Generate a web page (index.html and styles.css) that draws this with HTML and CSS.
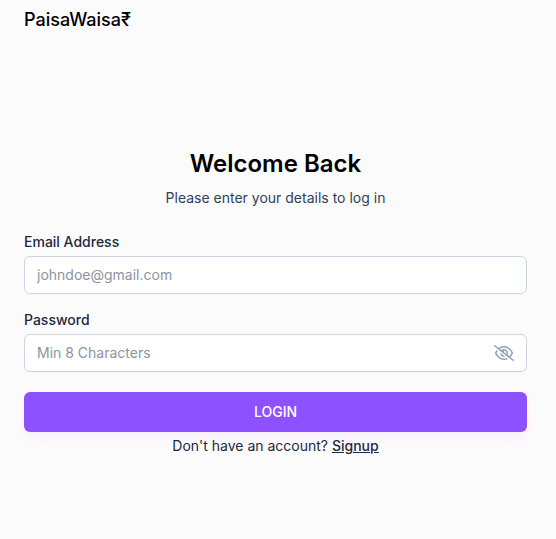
FILE: index.html
```html
<!DOCTYPE html>
<html lang="en">
<head>
<meta charset="utf-8">
<title>PaisaWaisa</title>
<link rel="stylesheet" href="styles.css">
</head>
<body>
<div class="page">
  <h2 class="brand">PaisaWaisa₹</h2>
  <main class="content">
    <h1 class="title">Welcome Back</h1>
    <p class="subtitle">Please enter your details to log in</p>
    <form class="form">
      <label class="label" for="email">Email Address</label>
      <div class="input-box"><input id="email" type="text" placeholder="johndoe@gmail.com"></div>
      <label class="label" for="password">Password</label>
      <div class="input-box">
        <input id="password" type="password" placeholder="Min 8 Characters">
        <svg class="eye" viewBox="0 0 640 512" fill="currentColor"><path d="M38.800 5.100C28.400-3.100 13.300-1.200 5.100 9.200S-1.200 34.700 9.200 42.900l592 464c10.400 8.200 25.500 6.300 33.700-4.100s6.300-25.500-4.100-33.700L525.600 386.700c39.600-40.600 66.400-86.100 79.900-118.400c3.300-7.900 3.300-16.700 0-24.600c-14.900-35.700-46.200-87.700-93-131.100C465.500 68.800 400.800 32 320 32c-68.200 0-125 26.300-169.300 60.800L38.800 5.100zm151 118.300C226 97.700 269.500 80 320 80c65.200 0 118.800 29.600 159.900 67.700C518.400 183.500 545 226 558.600 256c-12.600 28-36.600 66.800-70.900 100.900l-53.800-42.200c9.100-17.600 14.200-37.500 14.200-58.700c0-70.700-57.300-128-128-128c-32.200 0-61.700 11.900-84.200 31.500l-46.100-36.100zM394.900 284.200l-81.500-63.900c4.200-8.500 6.600-18.200 6.600-28.300c0-5.500-.7-10.900-2-16c.7 0 1.300 0 2 0c44.200 0 80 35.800 80 80c0 9.900-1.800 19.400-5.100 28.200zm9.400 130.300C378.800 425.400 350.700 432 320 432c-65.200 0-118.800-29.600-159.900-67.700C121.600 328.500 95 286 81.400 256c8.300-18.400 21.500-41.500 39.400-64.800L83.100 161.500C60.300 191.200 44 220.800 34.500 243.700c-3.300 7.900-3.300 16.700 0 24.600c14.900 35.700 46.200 87.700 93 131.100C174.500 443.200 239.200 480 320 480c47.800 0 89.900-12.900 126.200-32.500l-41.900-33zM192 256c0 70.700 57.300 128 128 128c13.300 0 26.100-2 38.200-5.800L302 334c-23.500-5.400-43.100-21.200-53.700-42.300l-56.100-44.200c-.2 2.800-.3 5.600-.3 8.500z"/></svg>
      </div>
      <button class="login" type="button">LOGIN</button>
      <p class="signup">Don't have an account? <a href="#">Signup</a></p>
    </form>
  </main>
</div>
</body>
</html>
```
FILE: styles.css
```css
* { box-sizing: border-box; margin: 0; padding: 0; }
body { background: #fcfbfc; font-family: Inter, sans-serif; color: #000; overflow: hidden; }
.page { height: 539px; padding: 6px 29px 0 24px; }
.brand { font-size: 18px; line-height: 28px; font-weight: 500; }
.content { padding-top: 114px; }
.title { font-size: 24px; line-height: 32px; font-weight: 600; text-align: center; }
.subtitle { margin-top: 8px; font-size: 14px; line-height: 20px; color: #314158; text-align: center; }
.form { margin-top: 24px; }
.label { display: block; font-size: 14px; line-height: 20px; font-weight: 500; color: #1d293d; }
.input-box { display: flex; align-items: center; height: 38px; margin: 4px 0 16px; padding: 0 12px; border: 1px solid #cad5e2; border-radius: 6px; background: #fff; }
.input-box input { flex: 1; min-width: 0; border: 0; outline: 0; background: transparent; font: 14px/20px Inter, sans-serif; }
.input-box input::placeholder { color: #8e949d; opacity: 1; }
.eye { width: 20px; height: 20px; color: #90a1b9; }
.login { display: block; width: 100%; height: 40px; margin-top: 20px; border: 0; border-radius: 6px; background: #8e51ff; color: #fff; font: 500 14px/20px Inter, sans-serif; box-shadow: 0 10px 15px -3px rgba(173,70,255,.05), 0 4px 6px -4px rgba(173,70,255,.05); }
.signup { margin-top: 4px; font-size: 14px; line-height: 20px; color: #1d293d; text-align: center; }
.signup a { color: inherit; font-weight: 500; text-decoration: underline; }
```
